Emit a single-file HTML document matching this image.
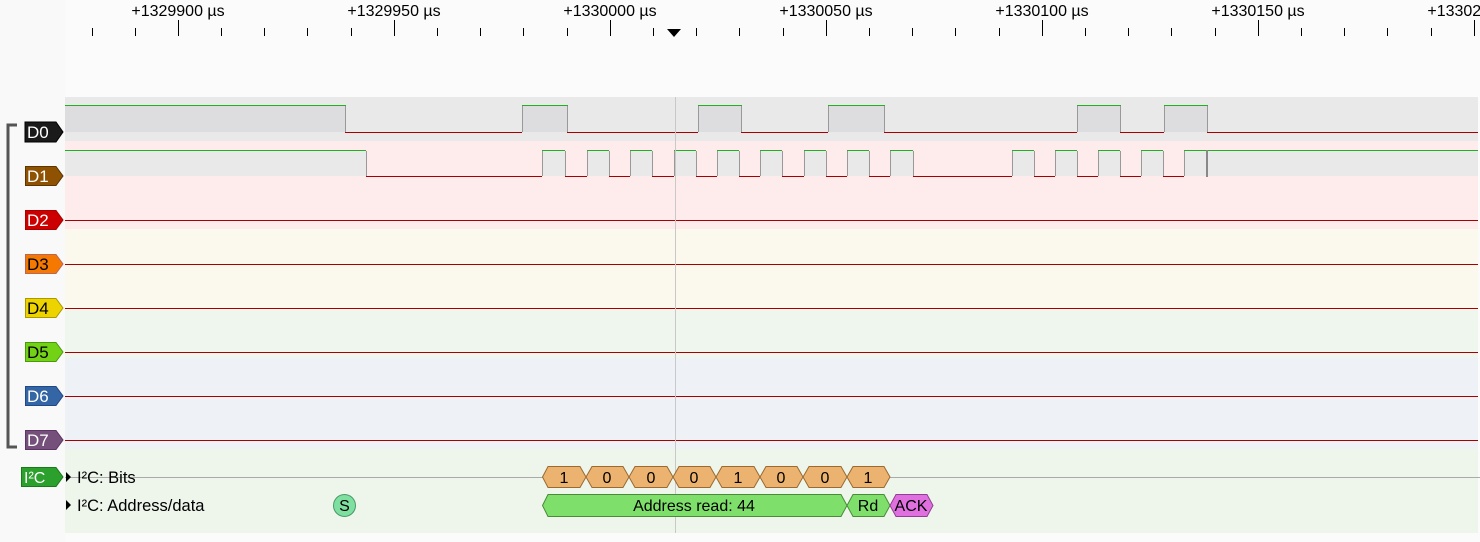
<!DOCTYPE html>
<html><head><meta charset="utf-8"><style>
html,body{margin:0;padding:0;background:#f9f9f9;}
svg{display:block;font-family:"Liberation Sans","DejaVu Sans",sans-serif;}
</style></head><body>
<svg width="1480" height="542" viewBox="0 0 1480 542" xmlns="http://www.w3.org/2000/svg">
<rect x="0" y="0" width="1480" height="542" fill="#f9f9f9"/>
<rect x="65" y="0" width="1415" height="542" fill="#fbfbfb"/>
<g font-size="16" fill="#000" text-anchor="middle">
<text x="178" y="16">+1329900 µs</text>
<text x="394" y="16">+1329950 µs</text>
<text x="610" y="16">+1330000 µs</text>
<text x="826" y="16">+1330050 µs</text>
<text x="1042" y="16">+1330100 µs</text>
<text x="1258" y="16">+1330150 µs</text>
<text x="1474" y="16">+1330200 µs</text>
</g>
<g stroke="#000" stroke-width="1">
<path d="M178.5 20V36M394.5 20V36M610.5 20V36M826.5 20V36M1042.5 20V36M1258.5 20V36M1474.5 20V36"/>
<path d="M92.5 28V36M135.5 28V36M221.5 28V36M264.5 28V36M307.5 28V36M351.5 28V36M437.5 28V36M480.5 28V36M523.5 28V36M567.5 28V36M653.5 28V36M696.5 28V36M739.5 28V36M783.5 28V36M869.5 28V36M912.5 28V36M955.5 28V36M999.5 28V36M1085.5 28V36M1128.5 28V36M1171.5 28V36M1215.5 28V36M1301.5 28V36M1344.5 28V36M1387.5 28V36M1431.5 28V36"/>
</g>
<path d="M667 29H681L674 37Z" fill="#000"/>
<rect x="65" y="97" width="1413" height="44" fill="#e9e9e9"/>
<rect x="65" y="141" width="1413" height="88" fill="#fdeceb"/>
<rect x="65" y="229" width="1413" height="81" fill="#fbf8ee"/>
<rect x="65" y="310" width="1413" height="48" fill="#eff6ed"/>
<rect x="65" y="358" width="1413" height="91" fill="#eef2f7"/>
<rect x="65" y="449" width="1413" height="84" fill="#eef6ec"/>
<g fill="#dddcdf">
<rect x="65" y="106" width="280" height="26"/>
<rect x="522" y="106" width="45" height="26"/>
<rect x="698" y="106" width="43" height="26"/>
<rect x="828" y="106" width="56" height="26"/>
<rect x="1077" y="106" width="43" height="26"/>
<rect x="1164" y="106" width="43" height="26"/>
</g>
<g fill="#e9e9e9">
<rect x="65" y="151" width="301" height="25"/>
<rect x="542" y="151" width="23" height="25"/><rect x="587" y="151" width="22" height="25"/>
<rect x="630" y="151" width="22" height="25"/><rect x="674" y="151" width="22" height="25"/>
<rect x="717" y="151" width="22" height="25"/><rect x="760" y="151" width="22" height="25"/>
<rect x="804" y="151" width="22" height="25"/><rect x="847" y="151" width="22" height="25"/>
<rect x="890" y="151" width="23" height="25"/>
<rect x="1012" y="151" width="22" height="25"/><rect x="1055" y="151" width="22" height="25"/>
<rect x="1098" y="151" width="22" height="25"/><rect x="1141" y="151" width="22" height="25"/>
<rect x="1184" y="151" width="294" height="25"/>
</g>
<g fill="none" stroke-width="1">
<path stroke="#999" d="M345.5 106V132M522.5 106V132M567.5 106V132M698.5 106V132M741.5 106V132M828.5 106V132M884.5 106V132M1077.5 106V132M1120.5 106V132M1164.5 106V132M1207.5 106V132"/>
<path stroke="#999" d="M366.5 151V176M542.5 151V176M565.5 151V176M587.5 151V176M609.5 151V176M630.5 151V176M652.5 151V176M674.5 151V176M696.5 151V176M717.5 151V176M739.5 151V176M760.5 151V176M782.5 151V176M804.5 151V176M826.5 151V176M847.5 151V176M869.5 151V176M890.5 151V176M913.5 151V176M1012.5 151V176M1034.5 151V176M1055.5 151V176M1077.5 151V176M1098.5 151V176M1120.5 151V176M1141.5 151V176M1163.5 151V176M1184.5 151V176"/>
<path stroke="#22b022" d="M65 105.5H346M522 105.5H568M698 105.5H742M828 105.5H885M1077 105.5H1121M1164 105.5H1208"/>
<path stroke="#a80000" d="M345 132.5H522M567 132.5H698M741 132.5H828M884 132.5H1077M1120 132.5H1164M1207 132.5H1478"/>
<path stroke="#22b022" d="M65 150.5H366M542 150.5H565M587 150.5H609M630 150.5H652M674 150.5H696M717 150.5H739M760 150.5H782M804 150.5H826M847 150.5H869M890 150.5H913M1012 150.5H1034M1055 150.5H1077M1098 150.5H1120M1141 150.5H1163M1184 150.5H1478"/>
<path stroke="#a80000" d="M366 176.5H542M565 176.5H587M609 176.5H630M652 176.5H674M696 176.5H717M739 176.5H760M782 176.5H804M826 176.5H847M869 176.5H890M913 176.5H1012M1034 176.5H1055M1077 176.5H1098M1120 176.5H1141M1163 176.5H1184"/>
<path stroke="#888" stroke-width="2" d="M1207 150V177"/>
<path stroke="#a80000" d="M65 220.5H1478M65 264.5H1478M65 308.5H1478M65 352.5H1478M65 396.5H1478M65 440.5H1478"/>
<path stroke="#aaa" d="M65 477.5H1480"/>
<path stroke="#c8c8c8" d="M675.5 97V533"/>
</g>
<path d="M17 125H8V447H17" fill="none" stroke="#555" stroke-width="3"/>
<g font-size="17">
<path d="M25 122H56L63 132L56 142H25Z" fill="#1a1a1a" stroke="#000"/><text x="27" y="138" fill="#fff">D0</text>
<path d="M25.5 166.5H56L63 176L56 185.5H25.5Z" fill="#8f5202" stroke="#5c3500"/><text x="27" y="182" fill="#fff">D1</text>
<path d="M25.5 210.5H56L63 220L56 229.5H25.5Z" fill="#cc0000" stroke="#a00"/><text x="27" y="226" fill="#fff">D2</text>
<path d="M25.5 254.5H56L63 264L56 273.5H25.5Z" fill="#f57900" stroke="#b65"/><text x="27" y="270" fill="#000">D3</text>
<path d="M25.5 298.5H56L63 308L56 317.5H25.5Z" fill="#edd400" stroke="#a90"/><text x="27" y="314" fill="#000">D4</text>
<path d="M25.5 342.5H56L63 352L56 361.5H25.5Z" fill="#73d216" stroke="#4a9a0e"/><text x="27" y="358" fill="#000">D5</text>
<path d="M25.5 386.5H56L63 396L56 405.5H25.5Z" fill="#3465a4" stroke="#204a87"/><text x="27" y="402" fill="#fff">D6</text>
<path d="M25.5 430.5H56L63 440L56 449.5H25.5Z" fill="#75507b" stroke="#5c3566"/><text x="27" y="446" fill="#fff">D7</text>
<path d="M21.5 467.5H56L63 477L56 486.5H21.5Z" fill="#2ca02c" stroke="#1a7a1a"/><text x="24" y="483" fill="#fff" font-size="16">I²C</text>
</g>
<g font-size="16.5">
<path d="M66 472L71 477L66 482Z" fill="#000"/>
<path d="M66 500L71 505L66 510Z" fill="#000"/>
<text x="77" y="483" fill="#000">I²C: Bits</text>
<text x="77" y="511" fill="#000">I²C: Address/data</text>
</g>
<circle cx="344.5" cy="505.5" r="11" fill="#7ee0a0" stroke="#4a9a6a"/>
<text x="344.5" y="511" font-size="16" text-anchor="middle">S</text>
<g stroke="#9a6a30" fill="#ebb270">
<path d="M542.5 477L548 466.5H580L586 477L580 487.5H548Z"/>
<path d="M586 477L592 466.5H623L629 477L623 487.5H592Z"/>
<path d="M629 477L635 466.5H667L673 477L667 487.5H635Z"/>
<path d="M673 477L679 466.5H710L716 477L710 487.5H679Z"/>
<path d="M716 477L722 466.5H754L760 477L754 487.5H722Z"/>
<path d="M760 477L766 466.5H797L803 477L797 487.5H766Z"/>
<path d="M803 477L809 466.5H841L847 477L841 487.5H809Z"/>
<path d="M847 477L853 466.5H884L890 477L884 487.5H853Z"/>
</g>
<g font-size="16" text-anchor="middle" fill="#000">
<text x="564" y="483">1</text><text x="607" y="483">0</text><text x="651" y="483">0</text><text x="694" y="483">0</text>
<text x="738" y="483">1</text><text x="781" y="483">0</text><text x="825" y="483">0</text><text x="868" y="483">1</text>
</g>
<path d="M542.5 505.5L548 494.5H841L847 505.5L841 516.5H548Z" fill="#7ee06a" stroke="#4a8a3a"/>
<path d="M847 505.5L853 494.5H884L890 505.5L884 516.5H853Z" fill="#7ee06a" stroke="#4a8a3a"/>
<path d="M890 505.5L896 494.5H927L933 505.5L927 516.5H896Z" fill="#e070e0" stroke="#904090"/>
<g font-size="16" text-anchor="middle" fill="#000">
<text x="694" y="511">Address read: 44</text>
<text x="868" y="511">Rd</text>
<text x="911" y="511">ACK</text>
</g>
</svg>
</body></html>
